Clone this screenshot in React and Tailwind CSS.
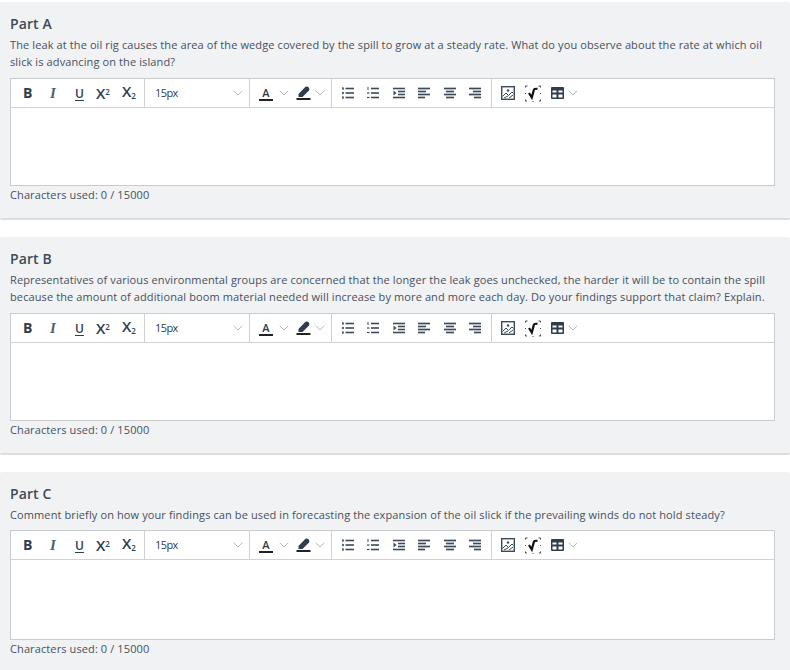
import { ChevronDown } from 'lucide-react';

const parts = [
  {
    title: 'Part A',
    lines: [
      'The leak at the oil rig causes the area of the wedge covered by the spill to grow at a steady rate. What do you observe about the rate at which oil',
      'slick is advancing on the island?',
    ],
    editorHeight: 'h-[77px]',
    cardClass: 'h-[218px]',
    textGap: 'mb-[8px]',
  },
  {
    title: 'Part B',
    lines: [
      'Representatives of various environmental groups are concerned that the longer the leak goes unchecked, the harder it will be to contain the spill',
      'because the amount of additional boom material needed will increase by more and more each day. Do your findings support that claim? Explain.',
    ],
    editorHeight: 'h-[77px]',
    cardClass: 'h-[218px]',
    textGap: 'mb-[8px]',
  },
  {
    title: 'Part C',
    lines: ['Comment briefly on how your findings can be used in forecasting the expansion of the oil slick if the prevailing winds do not hold steady?'],
    editorHeight: 'h-[79px]',
    cardClass: 'h-[200px]',
    textGap: 'mb-[7px]',
  },
];

function Chevron({ className }) {
  return <ChevronDown size={16} strokeWidth={1.1} className={`text-[#9aa0a6] ${className || ''}`} />;
}

function Lines({ rows }) {
  return (
    <svg width="12" height="12" viewBox="0 0 12 12" fill="none" stroke="#3c4a5a" strokeWidth="1.7">
      {rows.map((r, i) => <line key={i} x1={r[0]} x2={r[1]} y1={r[2]} y2={r[2]} />)}
    </svg>
  );
}

function Bullets() {
  return (
    <svg width="12" height="12" viewBox="0 0 12 12" fill="#3c4a5a" stroke="#3c4a5a" strokeWidth="1.6">
      <line x1="3.5" x2="12" y1="1.5" y2="1.5" />
      <line x1="3.5" x2="12" y1="6" y2="6" />
      <line x1="3.5" x2="12" y1="10.5" y2="10.5" />
      <circle cx="0.8" cy="1.5" r="0.4" />
      <circle cx="0.8" cy="6" r="0.4" />
      <circle cx="0.8" cy="10.5" r="0.4" />
    </svg>
  );
}

function Numbers() {
  return (
    <svg width="12" height="12" viewBox="0 0 12 12" stroke="#3c4a5a" strokeWidth="1.6">
      <line x1="4" x2="12" y1="1.5" y2="1.5" />
      <line x1="4" x2="12" y1="6" y2="6" />
      <line x1="4" x2="12" y1="10.5" y2="10.5" />
      <line x1="1" x2="1" y1="0" y2="3" strokeWidth="1" />
      <line x1="0" x2="2.5" y1="6" y2="6" strokeWidth="1.2" />
      <line x1="0" x2="2.5" y1="10.5" y2="10.5" strokeWidth="1.2" />
    </svg>
  );
}

function Toolbar() {
  return (
    <div className="flex h-[29px] border-b border-[#d0d2d4] text-[#2f3d4c]">
      <div className="flex w-[134px] items-center border-r border-[#cfd1d3] pl-[12px]">
        <span className="w-[27px] text-[14px] font-bold leading-none">B</span>
        <span className="w-[24px] font-['Liberation_Serif',serif] text-[15px] font-bold italic leading-none text-[#55606c]">I</span>
        <span className="w-[22px] pl-[1px] text-[12px] font-semibold leading-[13px] underline underline-offset-2">U</span>
        <span className="w-[26px] text-[15px] font-semibold leading-none">X<sup className="text-[8px]">2</sup></span>
        <span className="-mt-[3px] text-[15px] font-semibold leading-none">X<sub className="text-[8px]">2</sub></span>
      </div>
      <div className="flex w-[105px] items-center justify-between border-r border-[#cfd1d3] pl-[10px] pr-[3px]">
        <span className="text-[11px] tracking-[-0.6px]">15px</span>
        <Chevron />
      </div>
      <div className="flex w-[82px] items-center border-r border-[#cfd1d3] pl-[9px]">
        <span className="w-[14px] border-b-2 border-[#222] text-center text-[11px] font-semibold leading-[13px]">A</span>
        <Chevron className="ml-[3px]" />
        <svg width="15" height="14" viewBox="0 0 15 14" className="ml-[4px]">
          <path d="M2.5 8 L9.5 0.8 Q11 0 12.8 1.5 Q14 3 13 4.5 L6.5 11 H2.5 Z" fill="#2f3d4c" />
          <rect x="0.5" y="12" width="14" height="2" fill="#222" />
        </svg>
        <Chevron className="ml-[1px]" />
      </div>
      <div className="flex w-[160px] items-center gap-[13.4px] border-r border-[#cfd1d3] pl-[10px]">
        <Bullets />
        <Numbers />
        <svg width="12" height="12" viewBox="0 0 12 12" stroke="#3c4a5a" strokeWidth="1.6">
          <line x1="0" x2="12" y1="1.5" y2="1.5" />
          <line x1="5" x2="12" y1="4.5" y2="4.5" />
          <line x1="5" x2="12" y1="7.5" y2="7.5" />
          <line x1="0" x2="12" y1="10.5" y2="10.5" />
          <path d="M0.5 3.5 L3.5 6 L0.5 8.5 Z" fill="#3c4a5a" stroke="none" />
        </svg>
        <Lines rows={[[0, 12, 1.5], [0, 8, 4.5], [0, 12, 7.5], [0, 7, 10.5]]} />
        <Lines rows={[[0, 12, 1.5], [2, 10, 4.5], [0, 12, 7.5], [2, 10, 10.5]]} />
        <Lines rows={[[0, 12, 1.5], [4, 12, 4.5], [0, 12, 7.5], [5, 12, 10.5]]} />
      </div>
      <div className="flex flex-1 items-center pl-[9px]">
        <svg width="14" height="14" viewBox="0 0 14 14" fill="none" stroke="#3c4a5a">
          <rect x="0.7" y="0.7" width="12.6" height="12.6" strokeWidth="1.4" />
          <circle cx="7" cy="4.5" r="1.2" fill="#3c4a5a" stroke="none" />
          <path d="M1.5 10.5 L5 7 L7.5 9.5 L11 6 L12.5 7.5 M3 12 L7 10 M8 12 L12 9" strokeWidth="1" />
        </svg>
        <svg width="16" height="17" viewBox="0 0 16 17" fill="none" className="ml-[10px]">
          <path d="M0.5 2.5 V1 H2.5 M13.5 1 H15.5 V2.5 M0.5 8 V9 M15.5 8 V9 M0.5 14.5 V16 H2 M7.5 16.5 H8.5 M14 16 H15.5 V14.5" stroke="#333" strokeWidth="0.9" />
          <path d="M4 8 L6.8 12.5 L9 4.5 Q9.5 3.6 12.5 3.8" stroke="#111" strokeWidth="2.2" />
        </svg>
        <svg width="13" height="12" viewBox="0 0 13 12" className="ml-[10px]">
          <path fillRule="evenodd" fill="#2f3d4c" d="M1 0 H12 Q13 0 13 1 V11 Q13 12 12 12 H1 Q0 12 0 11 V1 Q0 0 1 0 Z M1.5 3.5 V5.5 H5.5 V3.5 Z M7.5 3.5 V5.5 H11.5 V3.5 Z M1.5 7.5 V10.5 H5.5 V7.5 Z M7.5 7.5 V10.5 H11.5 V7.5 Z" />
        </svg>
        <Chevron className="ml-[1px]" />
      </div>
    </div>
  );
}

function PartCard({ part }) {
  return (
    <section className={`flex shrink-0 flex-col rounded-[2px] border-b-2 border-[#dcdddf] bg-[#f1f2f4] pl-[10px] pr-[15px] pt-[12px] ${part.cardClass}`}>
      <h2 className="h-[19px] text-[14px] font-semibold leading-[19px] tracking-[0.1px] text-[#3d4a59]">{part.title}</h2>
      <div className={`mt-[3px] text-[11px] leading-[17px] tracking-[0.11px] text-[#46515e] ${part.textGap}`}>
        {part.lines.map((line) => <p key={line} className="whitespace-nowrap">{line}</p>)}
      </div>
      <div className="border border-[#c9cbcd] bg-white">
        <Toolbar />
        <div className={part.editorHeight} />
      </div>
      <p className="h-[18px] text-[11px] leading-[18px] tracking-[0.11px] text-[#46515e]">Characters used: 0 / 15000</p>
    </section>
  );
}

export default function App() {
  return (
    <div className="flex h-[670px] w-[790px] flex-col gap-[17px] overflow-hidden bg-white pt-[2px] font-['Open_Sans',sans-serif]">
      {parts.map((part) => <PartCard key={part.title} part={part} />)}
    </div>
  );
}
